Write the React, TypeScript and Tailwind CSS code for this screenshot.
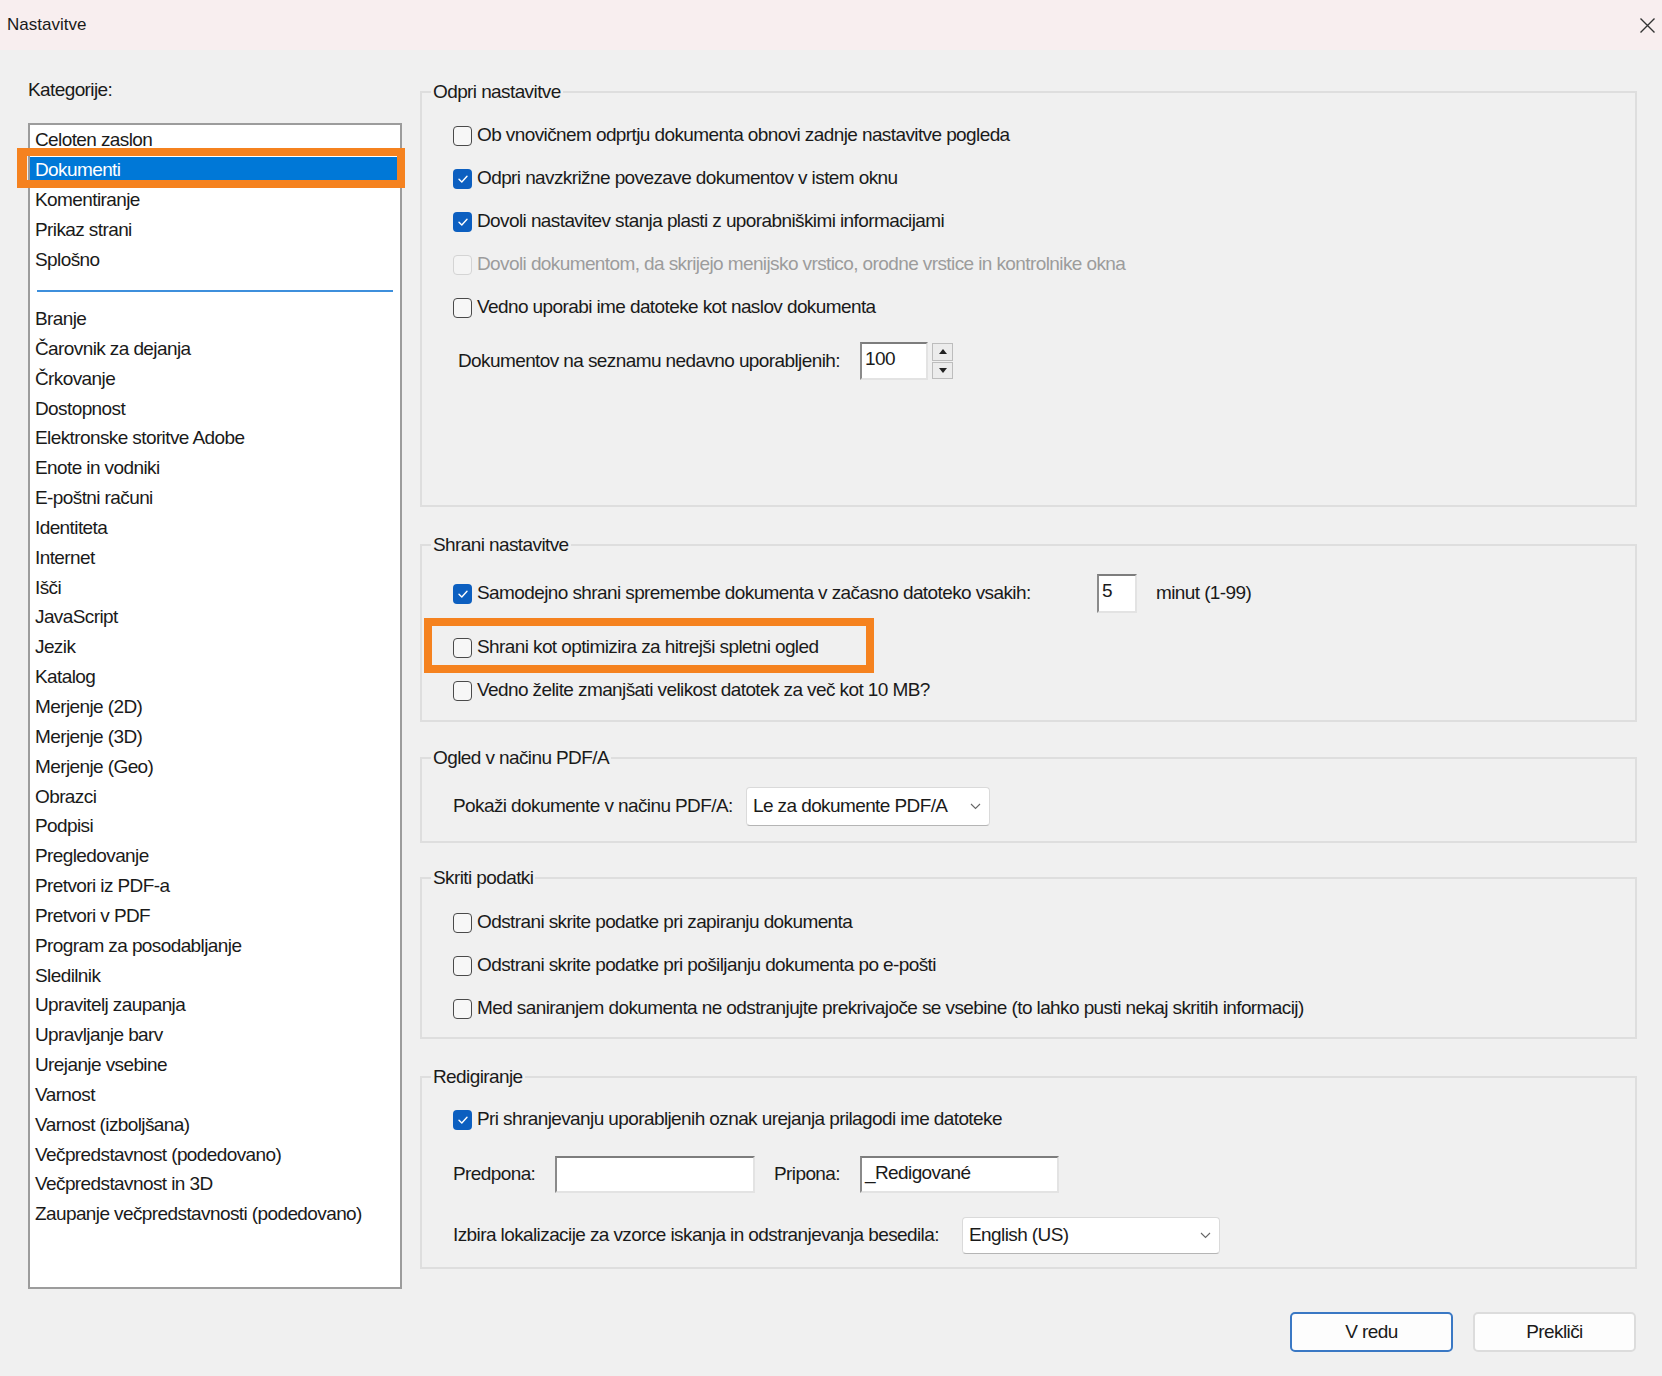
import React from 'react';

type CheckState = 'on' | 'off' | 'disabled';

const topCategories = ['Celoten zaslon', 'Dokumenti', 'Komentiranje', 'Prikaz strani', 'Splošno'];

const categories = [
  'Branje',
  'Čarovnik za dejanja',
  'Črkovanje',
  'Dostopnost',
  'Elektronske storitve Adobe',
  'Enote in vodniki',
  'E-poštni računi',
  'Identiteta',
  'Internet',
  'Išči',
  'JavaScript',
  'Jezik',
  'Katalog',
  'Merjenje (2D)',
  'Merjenje (3D)',
  'Merjenje (Geo)',
  'Obrazci',
  'Podpisi',
  'Pregledovanje',
  'Pretvori iz PDF-a',
  'Pretvori v PDF',
  'Program za posodabljanje',
  'Sledilnik',
  'Upravitelj zaupanja',
  'Upravljanje barv',
  'Urejanje vsebine',
  'Varnost',
  'Varnost (izboljšana)',
  'Večpredstavnost (podedovano)',
  'Večpredstavnost in 3D',
  'Zaupanje večpredstavnosti (podedovano)',
];

const Check: React.FC<{ state: CheckState }> = ({ state }) => {
  if (state === 'on') {
    return (
      <span className="flex h-[20px] w-[19px] shrink-0 items-center justify-center rounded-[4px] bg-[#0c5fc0]">
        <svg width="12" height="10" viewBox="0 0 12 10" fill="none">
          <path d="M2 5.2 L4.8 8 L10 2.2" stroke="white" strokeWidth="1.4" strokeLinecap="round" strokeLinejoin="round" />
        </svg>
      </span>
    );
  }
  return (
    <span
      className={`h-[20px] w-[19px] shrink-0 rounded-[4px] border-[1.5px] ${
        state === 'disabled' ? 'border-[#d4d4d4] bg-[#f4f4f4]' : 'border-[#4a4a4a] bg-[#f7f7f7]'
      }`}
    />
  );
};

const CheckRow: React.FC<{ state: CheckState; label: string; className?: string }> = ({ state, label, className }) => (
  <div className={`flex h-[43px] items-center pl-[31px] ${className ?? ''}`}>
    <Check state={state} />
    <span className={`ml-[5px] ${state === 'disabled' ? 'text-[#9c9c9c]' : ''}`}>{label}</span>
  </div>
);

const Group: React.FC<{ title: string; className: string; children: React.ReactNode }> = ({ title, className, children }) => (
  <fieldset className={`min-w-0 border-2 border-[#dedede] ${className}`}>
    <legend className="ml-[9px] px-[2px] leading-[24px]">{title}</legend>
    {children}
  </fieldset>
);

const Chevron = () => (
  <svg width="11" height="7" viewBox="0 0 11 7" fill="none">
    <path d="M1 1 L5.5 5.5 L10 1" stroke="#666" strokeWidth="1.1" />
  </svg>
);

const Sunken: React.FC<{ className: string; value?: string }> = ({ className, value }) => (
  <div
    className={`border-2 border-t-[#7d7d7d] border-l-[#8a8a8a] border-r-[#e3e3e3] border-b-[#e3e3e3] bg-white pl-[3px] leading-[30px] ${className}`}
  >
    {value}
  </div>
);

const Combo: React.FC<{ className: string; value: string }> = ({ className, value }) => (
  <div
    className={`flex items-center justify-between rounded-[4px] border border-[#dadada] border-b-[#b5b5b5] bg-white pl-[6px] pr-[8px] ${className}`}
  >
    <span>{value}</span>
    <Chevron />
  </div>
);

export default function App() {
  return (
    <div className="flex h-[1376px] w-[1662px] flex-col overflow-hidden whitespace-nowrap bg-[#f0f0f0] font-['Liberation_Sans',Arial,sans-serif] text-[19px] tracking-[-0.6px] text-[#1a1a1a]">
      {/* Title bar */}
      <div className="flex h-[50px] shrink-0 items-center justify-between bg-[#f8eeef] pl-[7px] pr-[6px]">
        <span className="text-[17px] tracking-normal">Nastavitve</span>
        <svg width="17" height="17" viewBox="0 0 17 17" fill="none">
          <path d="M1.5 1.5 L15.5 15.5 M15.5 1.5 L1.5 15.5" stroke="#333" strokeWidth="1.4" />
        </svg>
      </div>

      <div className="flex flex-1">
        {/* Categories */}
        <div className="ml-[28px] w-[374px] shrink-0 pt-[28px]">
          <div className="leading-[24px]">Kategorije:</div>
          <div className="mt-[21px] h-[1166px] border-2 border-[#9c9c9c] bg-white">
            {topCategories.map((c) =>
              c === 'Dokumenti' ? (
                <div key={c} className="h-[30px] pt-[2px] pr-[2px]">
                  <div className="relative h-[23px] bg-[#0078d7] pl-[5px] leading-[25px] text-white">
                    {c}
                    <div className="absolute -top-[9px] -right-[7px] -bottom-[8px] -left-[13px] border-[8px] border-l-[10px] border-[#f5821f]" />
                  </div>
                </div>
              ) : (
                <div key={c} className="h-[30px] pl-[5px] leading-[30px]">
                  {c}
                </div>
              )
            )}
            <div className="mx-[7px] mt-[15px] mb-[12px] h-[2px] bg-[#3d8fdc]" />
            {categories.map((c) => (
              <div key={c} className="h-[29.85px] pl-[5px] leading-[30px]">
                {c}
              </div>
            ))}
          </div>
        </div>

        {/* Settings */}
        <div className="ml-[18px] w-[1217px] shrink-0 pt-[30px]">
          <Group title="Odpri nastavitve" className="h-[427px]">
            <div className="pt-[10px]">
              <CheckRow state="off" label="Ob vnovičnem odprtju dokumenta obnovi zadnje nastavitve pogleda" />
              <CheckRow state="on" label="Odpri navzkrižne povezave dokumentov v istem oknu" />
              <CheckRow state="on" label="Dovoli nastavitev stanja plasti z uporabniškimi informacijami" />
              <CheckRow state="disabled" label="Dovoli dokumentom, da skrijejo menijsko vrstico, orodne vrstice in kontrolnike okna" />
              <CheckRow state="off" label="Vedno uporabi ime datoteke kot naslov dokumenta" />
              <div className="mt-[13px] flex h-[38px] items-center pl-[36px]">
                <span className="w-[402px]">Dokumentov na seznamu nedavno uporabljenih:</span>
                <Sunken className="h-[38px] w-[68px]" value="100" />
                <div className="ml-[4px] flex h-[36px] w-[21px] flex-col gap-[1px]">
                  <div className="flex flex-1 items-center justify-center border border-[#bdbdbd] bg-[#ececec]">
                    <svg width="8" height="5" viewBox="0 0 8 5"><path d="M0 5 L4 0 L8 5 Z" fill="#222" /></svg>
                  </div>
                  <div className="flex flex-1 items-center justify-center border border-[#bdbdbd] bg-[#ececec]">
                    <svg width="8" height="5" viewBox="0 0 8 5"><path d="M0 0 L4 5 L8 0 Z" fill="#222" /></svg>
                  </div>
                </div>
              </div>
            </div>
          </Group>

          <Group title="Shrani nastavitve" className="mt-[26px] h-[189px]">
            <div className="mt-[17px] flex h-[39px] items-center pl-[31px]">
              <Check state="on" />
              <span className="ml-[5px] w-[620px]">Samodejno shrani spremembe dokumenta v začasno datoteko vsakih:</span>
              <Sunken className="h-[39px] w-[40px]" value="5" />
              <span className="ml-[19px]">minut (1-99)</span>
            </div>
            <div className="relative mt-[13px]">
              <CheckRow state="off" label="Shrani kot optimizira za hitrejši spletni ogled" />
              <div className="absolute -top-[8px] -bottom-[4px] left-[2px] w-[450px] border-[8px] border-[#f5821f]" />
            </div>
            <CheckRow state="off" label="Vedno želite zmanjšati velikost datotek za več kot 10 MB?" />
          </Group>

          <Group title="Ogled v načinu PDF/A" className="mt-[24px] h-[97px]">
            <div className="mt-[17px] flex items-center pl-[31px]">
              <span className="w-[293px]">Pokaži dokumente v načinu PDF/A:</span>
              <Combo className="h-[39px] w-[244px]" value="Le za dokumente PDF/A" />
            </div>
          </Group>

          <Group title="Skriti podatki" className="mt-[23px] h-[173px]">
            <div className="pt-[11px]">
              <CheckRow state="off" label="Odstrani skrite podatke pri zapiranju dokumenta" />
              <CheckRow state="off" label="Odstrani skrite podatke pri pošiljanju dokumenta po e-pošti" />
              <CheckRow
                state="off"
                label="Med saniranjem dokumenta ne odstranjujte prekrivajoče se vsebine (to lahko pusti nekaj skritih informacij)"
              />
            </div>
          </Group>

          <Group title="Redigiranje" className="mt-[26px] h-[204px]">
            <CheckRow state="on" label="Pri shranjevanju uporabljenih oznak urejanja prilagodi ime datoteke" className="mt-[9px]" />
            <div className="mt-[15px] flex h-[37px] items-center pl-[31px]">
              <span className="w-[102px]">Predpona:</span>
              <Sunken className="h-[37px] w-[200px]" />
              <span className="ml-[19px] w-[86px]">Pripona:</span>
              <Sunken className="h-[37px] w-[199px]" value="_Redigované" />
            </div>
            <div className="mt-[24px] flex h-[37px] items-center pl-[31px]">
              <span className="w-[509px]">Izbira lokalizacije za vzorce iskanja in odstranjevanja besedila:</span>
              <Combo className="h-[37px] w-[258px]" value="English (US)" />
            </div>
          </Group>

          <div className="mt-[43px] flex justify-end gap-[20px] pr-[1px]">
            <button className="h-[40px] w-[163px] rounded-[5px] border-2 border-[#3a78c4] bg-[#fdfdfd]">V redu</button>
            <button className="h-[40px] w-[163px] rounded-[5px] border-2 border-[#dcdcdc] bg-[#fdfdfd]">Prekliči</button>
          </div>
        </div>
      </div>
    </div>
  );
}
